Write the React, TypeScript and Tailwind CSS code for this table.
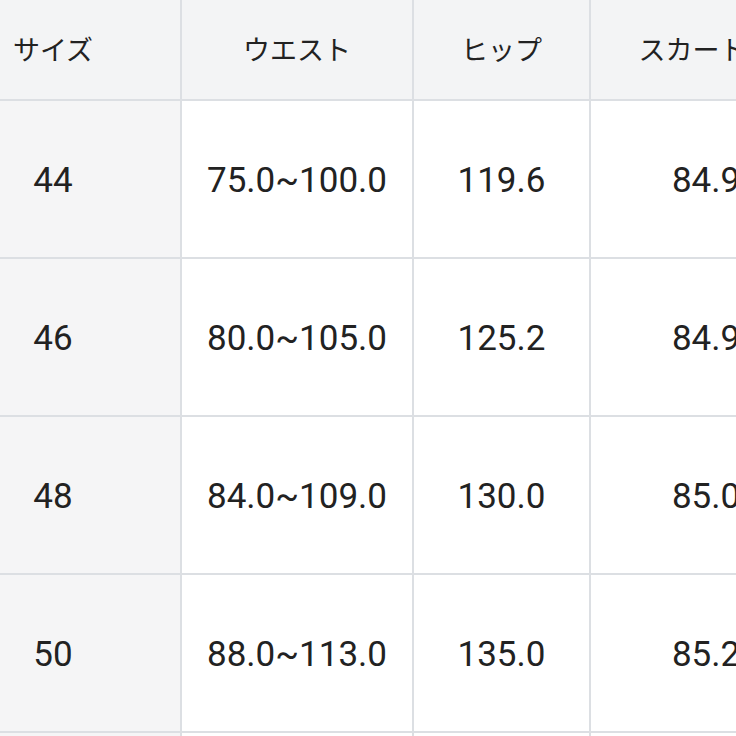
const headers = ["サイズ", "ウエスト", "ヒップ", "スカート丈"];

const rows = [
  ["44", "75.0~100.0", "119.6", "84.9"],
  ["46", "80.0~105.0", "125.2", "84.9"],
  ["48", "84.0~109.0", "130.0", "85.0"],
  ["50", "88.0~113.0", "135.0", "85.2"],
];

function FirstCell({ children, header = false }: { children: React.ReactNode; header?: boolean }) {
  return (
    <div
      className={
        header
          ? "flex items-center bg-[#f3f4f5] pt-[4px] text-[27px]"
          : "flex items-center bg-[#f5f5f6] pt-[4px] text-[35px]"
      }
    >
      <span className="block w-[106px] text-center">{children}</span>
    </div>
  );
}

export default function App() {
  return (
    <div className="h-[736px] w-[736px] overflow-hidden bg-white">
      <div
        className="grid w-[821px] grid-cols-[180px_230px_175px_230px] grid-rows-[99px_156px_156px_156px_156px_156px] gap-[2px] bg-[#dcdfe3] text-[#222222]"
        style={{ fontFamily: '"Roboto", "Noto Sans CJK JP", sans-serif' }}
      >
        {headers.map((h, i) =>
          i === 0 ? (
            <FirstCell key={h} header>
              {h}
            </FirstCell>
          ) : (
            <div
              key={h}
              className="flex items-center justify-center bg-[#f3f4f5] pt-[4px] text-[27px] whitespace-nowrap"
            >
              {h}
            </div>
          ),
        )}
        {rows.map((r) =>
          r.map((v, i) =>
            i === 0 ? (
              <FirstCell key={r[0] + i}>{v}</FirstCell>
            ) : (
              <div
                key={r[0] + i}
                className="flex items-center justify-center bg-white pt-[4px] text-[35px] whitespace-nowrap"
              >
                {v}
              </div>
            ),
          ),
        )}
        <div className="bg-[#f5f5f6]" />
        <div className="bg-white" />
        <div className="bg-white" />
        <div className="bg-white" />
      </div>
    </div>
  );
}
